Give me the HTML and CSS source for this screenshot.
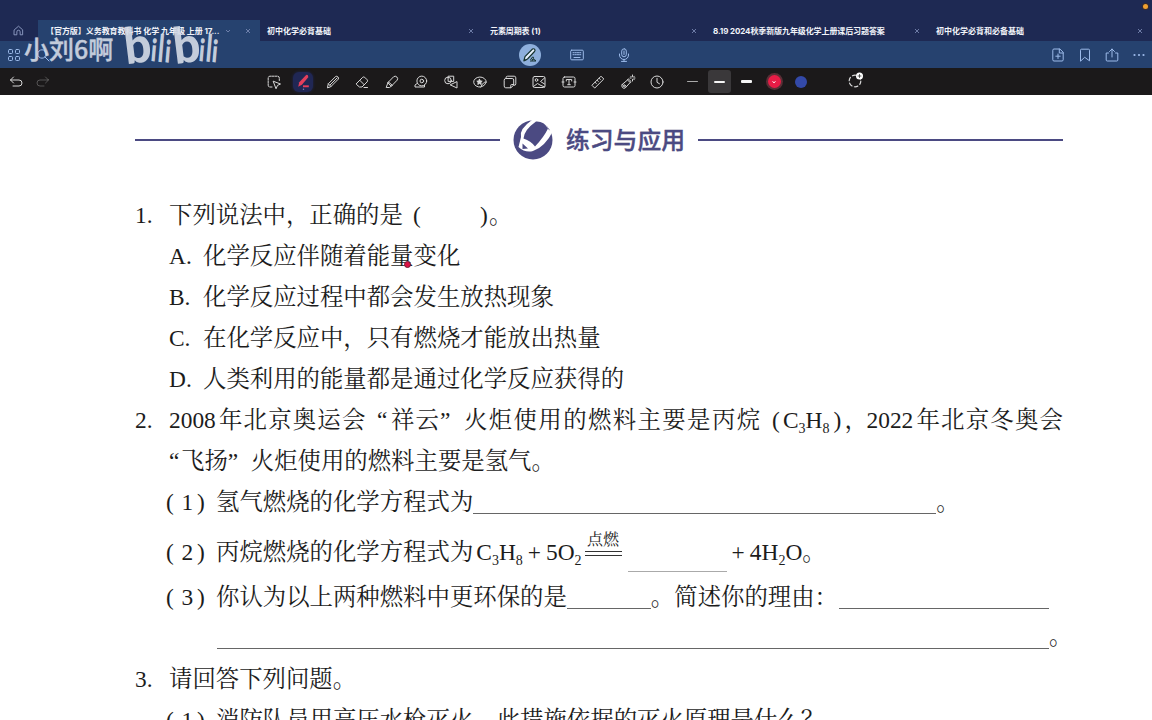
FILE: index.html
```html
<!DOCTYPE html>
<html lang="zh-CN">
<head>
    <meta charset="UTF-8">
    <meta name="viewport" content="width=device-width, initial-scale=1.0">
    <title>练习与应用</title>
    <link rel="stylesheet" href="styles.css">
</head>
<body>

    <div class="statusbar"><span class="rec-dot"></span></div>

    <div class="tabs">
        <div class="home">
            <svg class="icon" viewBox="0 0 12 12"><path d="M1.5 5.2 6 1.3l4.500 3.900V10.700H7.800V7.500a1.800 1.800 0 0 0-3.600 0v3.200H1.500z"/></svg>
        </div>
        <div class="tab active">
            <span class="tab-name">【官方版】义务教育教科书 化学 九年级 上册 17...</span>
            <svg class="chev" viewBox="0 0 6 6"><path d="M1 2l2 2 2-2"/></svg>
            <svg class="close" viewBox="0 0 6 6"><path d="M1 1l4 4M5 1L1 5"/></svg>
        </div>
        <div class="tab">
            <span class="tab-name">初中化学必背基础</span>
            <svg class="close" viewBox="0 0 6 6"><path d="M1 1l4 4M5 1L1 5"/></svg>
        </div>
        <div class="tab">
            <span class="tab-name">元素周期表 (1)</span>
            <svg class="close" viewBox="0 0 6 6"><path d="M1 1l4 4M5 1L1 5"/></svg>
        </div>
        <div class="tab">
            <span class="tab-name">8.19 2024秋季新版九年级化学上册课后习题答案</span>
            <svg class="close" viewBox="0 0 6 6"><path d="M1 1l4 4M5 1L1 5"/></svg>
        </div>
        <div class="tab">
            <span class="tab-name">初中化学必背和必备基础</span>
            <svg class="close" viewBox="0 0 6 6"><path d="M1 1l4 4M5 1L1 5"/></svg>
        </div>
    </div>

    <div class="navbar">
        <div class="nav-left">
            <svg class="icon" viewBox="0 0 14 14"><rect x="1.500" y="1.500" width="4" height="4" rx="1"/><rect x="8.500" y="1.500" width="4" height="4" rx="1"/><rect x="1.500" y="8.500" width="4" height="4" rx="1"/><rect x="8.500" y="8.500" width="4" height="4" rx="1"/></svg>
            <svg class="icon" viewBox="0 0 14 14"><circle cx="6" cy="6" r="4.200"/><path d="M9 9l4 4"/></svg>
        </div>
        <div class="nav-mid">
            <div class="pen-mode">
                <svg viewBox="0 0 16 16"><path class="pen-body" d="M2 13.500l1-4L10.500 2q1.500-.7 2.300.5.600 1-.3 2L5.500 12z"/><path class="pen-line" d="M2 14l3-1.500M8.500 13q2-4 2.800-3t-1.300 3.500q2.500-2.500 2.500-.5 0 1 1.500.3M8 14h6"/></svg>
            </div>
            <svg class="icon" viewBox="0 0 14 14"><rect x=".7" y="2.200" width="12.600" height="9.600" rx="1"/><path d="M3 4.700h8M3 6.700h8" stroke-dasharray="1.200 1"/><path d="M4 9.500h6"/></svg>
            <svg class="icon" viewBox="0 0 14 14"><rect x="4.700" y=".8" width="4.600" height="8" rx="2.300"/><path d="M2.500 6v1a4.500 4.500 0 0 0 9 0V6M7 11.500v2M4.500 13.400h5M7 3v3.500"/></svg>
        </div>
        <div class="nav-right">
            <svg class="icon" viewBox="0 0 14 14"><path d="M8.500 1H3Q1.800 1 1.800 2.200v9.600Q1.800 13 3 13h8q1.200 0 1.200-1.200V4.700zM8.300 1v4h3.900M7 6v4.500M4.800 8.200h4.400"/></svg>
            <svg class="icon" viewBox="0 0 14 14"><path d="M2.500 12.800V2.200Q2.500 1.200 3.500 1.200h7q1 0 1 1v10.600L7 9.500z"/></svg>
            <svg class="icon" viewBox="0 0 14 14"><path d="M3.500 5H1.200v7q0 1 1 1h9.600q1 0 1-1V5h-2.300M7 9V1M4.500 3.500L7 1l2.500 2.500"/></svg>
            <svg class="icon dots" viewBox="0 0 14 14"><circle cx="2.500" cy="7" r="1.100"/><circle cx="7" cy="7" r="1.100"/><circle cx="11.500" cy="7" r="1.100"/></svg>
        </div>
    </div>

    <div class="toolbar">
        <div class="history">
            <svg class="icon" viewBox="0 0 14 14"><path d="M4.500 2L1.500 5l3 3M1.500 5H10a2.800 2.800 0 0 1 0 6H4"/></svg>
            <svg class="icon off" viewBox="0 0 14 14"><path d="M9.500 2l3 3-3 3M12.500 5H4a2.800 2.800 0 0 0 0 6h4"/></svg>
        </div>
        <div class="tools">
            <svg class="icon" viewBox="0 0 14 14"><path d="M5 12H3q-1.800 0-1.800-1.800V3Q1.200 1.200 3 1.200h7.500q1.800 0 1.800 1.800v2.500" stroke-dasharray="2.200 1"/><path d="M6.500 6.300l7 2.700-3 1.400-1.300 3z"/></svg>
            <div class="current">
                <svg viewBox="0 0 16 16"><path class="red" d="M3 13l1-4.200 6.500-7q2-.5 2 2.200L6.500 11z"/><path class="red-line" d="M7.500 12.500h5.500"/><circle cx="8" cy="15.300" r=".7" fill="#7f86b5"/></svg>
            </div>
            <svg class="icon" viewBox="0 0 14 14"><path d="M1.500 12.500l.8-3.700L9.700 1.500q1-.7 2.200.4 1.100 1.200.4 2.200L5 11.500zM4 10l7-7M2.300 8.800l2.700 2.700"/></svg>
            <svg class="icon" viewBox="0 0 14 14"><path d="M1.500 8.500l6.200-6.200q1-.8 2 0l2.500 2.500q.8 1 0 2L7 12H4.500l-3-2.500q-.4-.5 0-1zM4.800 5.300l4.500 4.500M9 12.500h3.500"/></svg>
            <svg class="icon" viewBox="0 0 14 14"><path d="M3 7.500L8.700 1.700q1.500-1.200 3.200.3 1.500 1.700.2 3.200L6.500 11zM3 7.500L1.200 12.500h3.300l2-1.500M3.500 7l3.800 3.300"/></svg>
            <svg class="icon" viewBox="0 0 14 14"><circle cx="7.800" cy="6" r="4.900"/><circle cx="7.800" cy="6" r="1.800"/><path d="M3.400 8.300L1 10v2h9.500v-2"/></svg>
            <svg class="icon" viewBox="0 0 14 14"><circle cx="4" cy="5.500" r="3.300"/><path d="M4.500 1.200h5.200v5.200H4.500zM13 7v6L6.500 10z"/></svg>
            <svg class="icon" viewBox="0 0 14 14"><path d="M13.300 7a6.300 5 0 1 0-5.500 5q4-.8 5.500-5-3-.6-5.500 5"/><path fill="#d8d8d8" d="M6.500 4.300l.8 1.700 1.900.2-1.400 1.300.4 1.900-1.700-1-1.700 1 .4-1.900-1.400-1.300 1.900-.2z"/></svg>
            <svg class="icon" viewBox="0 0 14 14"><path d="M3 3.500V2.800Q3 1.200 4.600 1.200h6.600q1.600 0 1.600 1.600v6q0 1.600-1.300 1.600M1.200 5q0-1.500 1.500-1.500h6.500q1.500 0 1.500 1.500v5L8 12.800H2.700q-1.500 0-1.500-1.500zM10.700 9.500H8.500q-.7 0-.7.7v2.500"/></svg>
            <svg class="icon" viewBox="0 0 14 14"><rect x="1" y="1.500" width="12" height="11" rx="1.500"/><circle cx="4.500" cy="5" r="1.300"/><path d="M1.500 11.500l4-3 2.500 1.500 4.500 2M12.500 3l-4 3.500 4 2.500"/></svg>
            <svg class="icon" viewBox="0 0 14 14"><rect x="1" y="2" width="12" height="10" rx="1.500"/><path d="M4.300 6V4.500h5.400V6M7 4.500v5M5.700 9.700h2.600M0 7h2M12 7h2"/></svg>
            <svg class="icon" viewBox="0 0 14 14"><path d="M1.200 10L10 1.200 12.800 4 4 12.800zM4 7.200l1.300 1.300M6 5.200l1.300 1.300M8 3.200l1.300 1.300"/></svg>
            <svg class="icon" viewBox="0 0 14 14"><path d="M1.200 9.500L6.500 5l2.700 2.500-5 5.500q-1.500.8-2.800-.5-1.200-1.500-.2-3zM6.500 5l.7-1.200 3 2.800-1 .9"/><circle cx="3.300" cy="10.800" r="1"/><path d="M11.500 0v1.500M11.500 4.500V6M9 3h1.200M12.800 3H14M9.700 1.200l.8.800M13.300 4.800l-.8-.8M13.300 1.200l-.8.800"/></svg>
            <svg class="icon" viewBox="0 0 14 14"><circle cx="7" cy="7" r="6"/><path d="M7 3.300V7.300l2.500 1.500"/></svg>
        </div>
        <div class="strokes">
            <div class="stroke thin"><i></i></div>
            <div class="stroke medium"><i></i></div>
            <div class="stroke thick"><i></i></div>
            <div class="swatch red"><svg viewBox="0 0 6 6"><path d="M1.500 2.500L3 3.700l1.500-1.200"/></svg></div>
            <div class="swatch blue"></div>
        </div>
        <svg class="icon lasso" viewBox="0 0 16 16"><circle cx="7" cy="9" r="5.800" stroke-dasharray="3.500 2.500"/><circle cx="11.500" cy="4" r="3.500" fill="#fff" stroke="none"/><path d="M11.500 2.500v3M10 4h3" stroke="#333" stroke-width=".8"/></svg>
    </div>

    <div class="watermark">
        <span class="author">小刘6啊</span>
        <svg class="brand" viewBox="0 0 94 46">
            <g transform="rotate(-7 12 40)"><text x="2" y="41" font-size="50" textLength="27" lengthAdjust="spacingAndGlyphs">b</text></g>
            <g transform="rotate(5 37 40)">
                <text x="26" y="40" font-size="31" textLength="6" lengthAdjust="spacingAndGlyphs">i</text>
                <text x="33" y="40" font-size="38" textLength="6" lengthAdjust="spacingAndGlyphs">l</text>
                <text x="40" y="40" font-size="31" textLength="6" lengthAdjust="spacingAndGlyphs">i</text>
            </g>
            <g transform="rotate(-7 60 40)"><text x="51" y="41" font-size="50" textLength="27" lengthAdjust="spacingAndGlyphs">b</text></g>
            <g transform="rotate(5 86 40)">
                <text x="74" y="40" font-size="31" textLength="6" lengthAdjust="spacingAndGlyphs">i</text>
                <text x="81" y="40" font-size="38" textLength="6" lengthAdjust="spacingAndGlyphs">l</text>
                <text x="87" y="40" font-size="31" textLength="6" lengthAdjust="spacingAndGlyphs">i</text>
            </g>
        </svg>
    </div>

    <div class="page">
        <div class="section-title">
            <span class="rule"></span>
            <svg class="emblem" viewBox="0 0 40 40">
                <circle cx="20" cy="20" r="19.500" fill="#4b4a82"/>
                <path d="M19 0Q6 9 8 17L5.500 27Q12 33 20 31 32 27 40 11L36 10 30 0z" fill="#fff"/>
                <path d="M23 1.500Q31 1 35 8.500 31 17 22 26.500 18 21 10.500 18.500 11 10 23 1.500zM9.500 23.500l5.500 5-5.500.5z" fill="#4b4a82"/>
            </svg>
            <h1>练习与应用</h1>
            <span class="rule"></span>
        </div>

        <div class="line"><span class="num">1.</span>下列说法中，正确的是<span class="gap-paren">(</span><span class="end-paren">)</span>。</div>
        <div class="line option"><span class="letter">A.</span>化学反应伴随着能量变化<span class="laser"></span></div>
        <div class="line option"><span class="letter">B.</span>化学反应过程中都会发生放热现象</div>
        <div class="line option"><span class="letter">C.</span>在化学反应中，只有燃烧才能放出热量</div>
        <div class="line option"><span class="letter">D.</span>人类利用的能量都是通过化学反应获得的</div>

        <div class="line wide">
            <span class="num">2.</span><span class="year">2008</span><span class="games">年北京奥运会</span><span class="quote">“</span><span class="cloud">祥云</span><span class="quote-end">”</span><span class="fuel">火炬使用的燃料主要是丙烷</span><span class="open">(</span><span class="formula">C<sub>3</sub>H<sub>8</sub></span><span class="shut">)</span><span class="comma">，</span><span class="year">2022</span><span class="games">年北京冬奥会</span>
        </div>
        <div class="line option"><span class="quote2">“</span>飞扬<span class="quote2-end">”</span>火炬使用的燃料主要是氢气。</div>
        <div class="line option"><span class="sub-num"><b>(</b><b>1</b><b>)</b></span>氢气燃烧的化学方程式为<span class="blank long"></span>。</div>
        <div class="line option equation">
            <span class="sub-num"><b>(</b><b>2</b><b>)</b></span>丙烷燃烧的化学方程式为<span class="formula reactant">C<sub>3</sub>H<sub>8</sub></span><span class="plus">+</span><span class="formula">5O<sub>2</sub></span><span class="condition">点燃</span><span class="blank product"></span><span class="plus">+</span><span class="formula">4H<sub>2</sub>O</span>。
        </div>
        <div class="line option tight"><span class="sub-num"><b>(</b><b>3</b><b>)</b></span>你认为以上两种燃料中更环保的是<span class="blank short"></span>。简述你的理由：<span class="blank reason"></span></div>
        <div class="line option answer"><span class="blank full"></span>。</div>

        <div class="line"><span class="num">3.</span>请回答下列问题。</div>
        <div class="line option"><span class="sub-num"><b>(</b><b>1</b><b>)</b></span>消防队员用高压水枪灭火，此措施依据的灭火原理是什么？</div>
    </div>

</body>
</html>
```
FILE: styles.css
```css
* {
    box-sizing: border-box;
}

body {
    margin: 0;
    height: 720px;
    overflow: hidden;
    position: relative;
    background: #fff;
    color: #1c1c1c;
    font-family: "Liberation Serif", "Noto Serif CJK SC", "Noto Sans CJK SC", serif;
}

svg {
    display: block;
    flex: none;
    overflow: visible;
}

.icon {
    width: 14px;
    height: 14px;
    fill: none;
    stroke: #d8d8d8;
    stroke-width: 1;
    stroke-linejoin: round;
    stroke-linecap: round;
}

/* window chrome */
.statusbar {
    height: 20px;
    background: #1e2953;
    display: flex;
    justify-content: flex-end;
    padding: 4px 4px 0 0;
}

.rec-dot {
    width: 5px;
    height: 5px;
    border-radius: 50%;
    background: #f0a030;
    box-shadow: 0 0 0 1px #3b2c2c;
}

.tabs {
    display: flex;
    height: 21px;
    background: #1e2953;
    color: #f2f4fa;
    font-family: Inter, "Noto Sans CJK SC", sans-serif;
    font-size: 8px;
    font-weight: 700;
}

.home {
    width: 38px;
    flex: none;
    display: flex;
    align-items: center;
    padding-left: 13px;
}

.home .icon {
    width: 11px;
    height: 11px;
    stroke: #8f9cc4;
}

.tab {
    width: 223px;
    flex: none;
    display: flex;
    align-items: center;
    padding: 0 9px 0 7px;
    white-space: nowrap;
    letter-spacing: -0.1px;
}

.tab:nth-child(3), .tab:last-child {
    letter-spacing: 0;
}

.tab.active {
    width: 222px;
    padding-left: 8px;
    background: #26426f;
}

.tab-name {
    flex: 1;
}

.active .tab-name {
    flex: none;
    width: 179px;
    letter-spacing: -0.05px;
}

.chev, .close {
    width: 6px;
    height: 6px;
    fill: none;
    stroke: #8291bb;
    stroke-width: 0.8;
}

.close {
    margin-left: auto;
}

.navbar {
    position: relative;
    height: 27px;
    background: #26426f;
    display: flex;
    align-items: center;
    justify-content: space-between;
    padding: 0 6px 0 7px;
}

.navbar .icon {
    stroke: #9dbbea;
}

.nav-left, .nav-mid, .nav-right {
    display: flex;
    align-items: center;
}

.nav-left {
    width: 200px;
    gap: 15px;
}

.nav-mid {
    flex: 1;
    padding-left: 312px;
    gap: 33px;
}

.nav-mid .pen-mode {
    width: 22px;
    height: 22px;
    margin-right: -4px;
    border-radius: 50%;
    background: #8eafdc;
    display: flex;
    align-items: center;
    justify-content: center;
}

.pen-mode svg {
    width: 16px;
    height: 16px;
}

.pen-body {
    fill: #e8f2ff;
    stroke: #17332f;
    stroke-width: 1.2;
}

.pen-line {
    fill: none;
    stroke: #17332f;
    stroke-width: 1;
}

.nav-right {
    gap: 13px;
}

.navbar .dots {
    fill: #9dbbea;
    stroke: none;
}

.toolbar {
    height: 27px;
    background: #1b191a;
    display: flex;
    align-items: center;
}

.history {
    width: 259px;
    display: flex;
    gap: 13px;
    padding-left: 9px;
}

.off {
    opacity: 0.3;
}

.tools {
    width: 413px;
    display: grid;
    grid-template-columns: repeat(14, 29.5px);
    justify-items: center;
    align-items: center;
}

.current {
    width: 20px;
    height: 20px;
    border-radius: 6px;
    background: #202754;
    box-shadow: 0 0 3px #202754;
    display: flex;
    align-items: center;
    justify-content: center;
}

.current svg {
    width: 17px;
    height: 17px;
}

.current .red {
    fill: #e33f5c;
}

.red-line {
    fill: none;
    stroke: #e33f5c;
    stroke-width: 1.8;
}

.strokes {
    display: grid;
    grid-template-columns: repeat(5, 27.2px);
    justify-items: center;
    align-items: center;
    padding-left: 7px;
}

.stroke {
    width: 23px;
    height: 23px;
    border-radius: 3px;
    display: flex;
    align-items: center;
    justify-content: center;
}

.stroke i {
    width: 11px;
    height: 2px;
    border-radius: 1px;
    background: #f5f5f5;
}

.stroke.thin i {
    height: 1px;
    background: #aaa;
}

.stroke.medium {
    background: #3a383a;
}

.stroke.thick i {
    height: 3px;
}

.swatch {
    width: 12px;
    height: 12px;
    border-radius: 50%;
}

.swatch.red {
    width: 13px;
    height: 13px;
    padding: 3.5px;
    background: #e81c46;
    box-shadow: 0 0 0 2px #5a2f36;
}

.swatch svg {
    fill: none;
    stroke: #fff;
    stroke-width: 1;
}

.swatch.blue {
    background: #3349a8;
}

.lasso {
    width: 16px;
    height: 16px;
    margin-left: 33px;
    margin-top: -3px;
    stroke-width: 1.2;
}

.watermark {
    position: absolute;
    left: 24px;
    top: 22px;
    display: flex;
    color: #d5dbe6;
    opacity: 0.9;
}

.author {
    width: 100px;
    padding-top: 9px;
    font: 500 25px/34px "Noto Sans CJK SC", sans-serif;
    -webkit-text-stroke: 0.4px #d5dbe6;
    white-space: nowrap;
}

.brand {
    width: 94px;
    height: 46px;
    fill: #d5dbe6;
    font-family: Lato, sans-serif;
    font-weight: 900;
}

/* worksheet */
.page {
    padding: 0 89px 0 135px;
    height: 645px;
}

.section-title {
    display: flex;
    align-items: center;
    height: 89px;
    margin-bottom: 10.5px;
    color: #4b4a82;
}

.section-title .rule {
    width: 365px;
    height: 2px;
    background: #4b4a82;
}

.emblem {
    width: 40px;
    height: 40px;
    margin: 0 13px 0 13px;
}

.section-title h1 {
    margin: -2px 13px 0 0;
    font: 500 23.8px/30px "Noto Sans CJK SC", sans-serif;
    -webkit-text-stroke: 0.4px #4b4a82;
}

.line {
    position: relative;
    display: flex;
    align-items: center;
    height: 41px;
    font-size: 23.4px;
    font-weight: 400;
    line-height: 41px;
    white-space: nowrap;
}

.line > span {
    flex: none;
}

.num, .letter {
    width: 34px;
}

.option {
    padding-left: 34px;
}

.gap-paren {
    width: 67px;
    margin-left: 10px;
}

.end-paren {
    width: 9px;
}

.laser {
    position: absolute;
    left: 269px;
    top: 25px;
    width: 7px;
    height: 7px;
    border-radius: 50%;
    background: #dd1245;
    border: 1px solid #6d2037;
}

.year {
    width: 50px;
}

.games {
    width: 158px;
    letter-spacing: 1.2px;
}

.quote {
    width: 14px;
}

.cloud {
    width: 49px;
    letter-spacing: 1.2px;
}

.quote-end {
    width: 24px;
}

.fuel {
    width: 308px;
    letter-spacing: 1.4px;
}

.open {
    width: 11px;
}

.formula {
    display: flex;
}

.formula sub {
    font-size: 14px;
    line-height: 41px;
    position: relative;
    top: 8px;
}

.shut {
    width: 11px;
    margin-left: 4px;
}

.comma {
    width: 22px;
}

.quote2 {
    width: 12px;
}

.quote2-end {
    width: 23px;
}

.sub-num {
    width: 50px;
    margin-left: -3px;
    display: flex;
}

.sub-num b {
    width: 15.5px;
    font-weight: 400;
}

.blank {
    height: 1px;
    margin-top: 22px;
    background: #666;
}

.blank.long {
    width: 463px;
}

.equation {
    height: 60px;
}

.reactant {
    margin-left: 3px;
}

.plus {
    margin: 0 5px 0 5px;
}

.condition {
    width: 37px;
    height: 27px;
    margin: -21px 6px 0 3px;
    border-bottom: 1px solid #333;
    box-shadow: inset 0 -3px 0 #fff, inset 0 -4px 0 #333;
    font-size: 16px;
    line-height: 22px;
    text-align: center;
}

.blank.product {
    width: 99px;
    margin-top: 38px;
    background: #aaa;
}

.tight {
    height: 30px;
}

.blank.short {
    width: 84px;
}

.blank.reason {
    width: 210px;
    margin-left: 1px;
}

.answer {
    height: 46.5px;
    padding-left: 82px;
}

.blank.full {
    width: 832px;
    margin-top: 26px;
}

.answer {
    line-height: 54px;
}
```
